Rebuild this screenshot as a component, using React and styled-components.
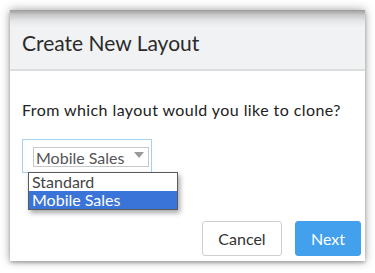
import React from "react";
import styled, { createGlobalStyle } from "styled-components";

const Global = createGlobalStyle`
  html, body {
    margin: 0;
    padding: 0;
    background: #ffffff;
  }
  body {
    font-family: Lato, "Open Sans", sans-serif;
    color: #333333;
  }
`;

const Page = styled.div`
  padding: 10px;
  width: 375px;
  height: 273px;
  box-sizing: border-box;
`;

const Dialog = styled.div`
  width: 355px;
  height: 251px;
  display: flex;
  flex-direction: column;
  background: #ffffff;
  box-shadow: 0 0 9px rgba(0, 0, 0, 0.38), 0 2px 3px rgba(0, 0, 0, 0.2);
  position: relative;
`;

const Header = styled.div`
  height: 61px;
  display: flex;
  align-items: center;
  padding: 6px 0 0 12px;
  box-sizing: border-box;
  background: linear-gradient(
    to bottom,
    #9c9c9c 0,
    #c9cacc 5px,
    #e6e7e9 11px,
    #f1f2f4 17px
  );
  border-bottom: 2px solid #dddddd;
`;

const Title = styled.h2`
  margin: 0;
  font-weight: 400;
  font-size: 21px;
  color: #2b2b2b;
`;

const Body = styled.div`
  flex: 1;
  padding: 29px 0 0 12px;
`;

const Question = styled.p`
  margin: 0;
  font-size: 16px;
  letter-spacing: 0.42px;
  color: #222222;
`;

const FocusBox = styled.div`
  position: relative;
  margin-top: 20px;
  width: 130px;
  height: 34px;
  box-sizing: border-box;
  border: 1px solid #a6d0f2;
  display: flex;
  align-items: center;
  padding-left: 10px;
`;

const SelectBox = styled.div`
  width: 116px;
  height: 20px;
  box-sizing: border-box;
  border: 1px solid #c8c8c8;
  display: flex;
  align-items: center;
  justify-content: space-between;
  padding: 0 4px 0 2px;
  font-size: 16px;
  color: #555555;
  margin-top: 2px;
`;

const Arrow = styled.span`
  width: 0;
  height: 0;
  border-left: 5px solid transparent;
  border-right: 5px solid transparent;
  border-top: 6px solid #9a9a9a;
  margin-top: -5px;
`;

const Menu = styled.ul`
  position: absolute;
  left: 5px;
  top: 32px;
  width: 148px;
  margin: 0;
  padding: 0;
  list-style: none;
  background: #ffffff;
  border: 1px solid #5a5a5a;
  box-shadow: 2px 3px 5px rgba(0, 0, 0, 0.35);
  z-index: 2;
`;

const Option = styled.li`
  height: 18px;
  line-height: 18px;
  padding-left: 3px;
  font-size: 16px;
  color: ${({ selected }) => (selected ? "#ffffff" : "#444444")};
  background: ${({ selected }) => (selected ? "#3a74d8" : "transparent")};
`;

const Footer = styled.div`
  display: flex;
  justify-content: flex-end;
  gap: 13px;
  padding: 0 4px 5px 0;
`;

const Button = styled.button`
  height: 35px;
  box-sizing: border-box;
  font-family: Lato, "Open Sans", sans-serif;
  font-size: 16px;
  border-radius: 3px;
  cursor: pointer;
  border: 1px solid ${({ primary }) => (primary ? "#42a0ec" : "#cfcfcf")};
  background: ${({ primary }) => (primary ? "#42a0ec" : "#ffffff")};
  color: ${({ primary }) => (primary ? "#ffffff" : "#333333")};
  width: ${({ primary }) => (primary ? "66px" : "80px")};
`;

export default function App() {
  const options = ["Standard", "Mobile Sales"];
  return (
    <Page>
      <Global />
      <Dialog>
        <Header>
          <Title>Create New Layout</Title>
        </Header>
        <Body>
          <Question>From which layout would you like to clone?</Question>
          <FocusBox>
            <SelectBox>
              <span>Mobile Sales</span>
              <Arrow />
            </SelectBox>
            <Menu>
              {options.map((o) => (
                <Option key={o} selected={o === "Mobile Sales"}>
                  {o}
                </Option>
              ))}
            </Menu>
          </FocusBox>
        </Body>
        <Footer>
          <Button>Cancel</Button>
          <Button primary>Next</Button>
        </Footer>
      </Dialog>
    </Page>
  );
}
